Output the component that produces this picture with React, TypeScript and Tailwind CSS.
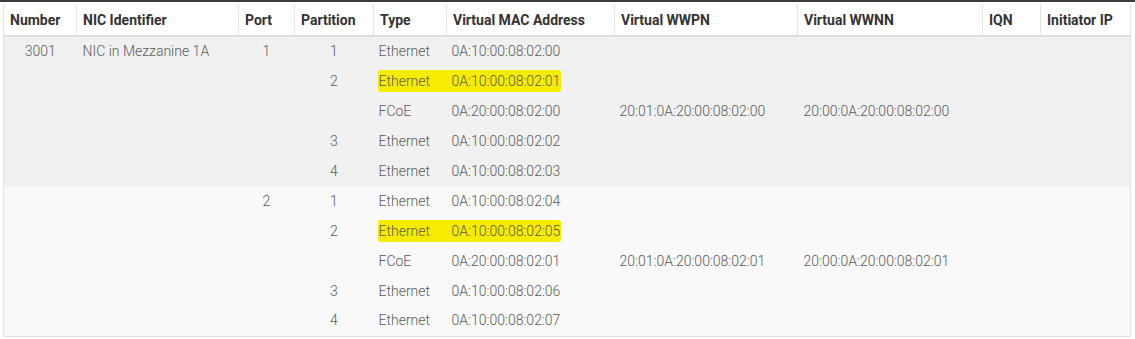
import React from "react";

type Row = {
  number?: string;
  nic?: string;
  port?: string;
  partition?: string;
  type: string;
  mac: string;
  wwpn?: string;
  wwnn?: string;
  hl?: boolean;
};

const group1: Row[] = [
  { number: "3001", nic: "NIC in Mezzanine 1A", port: "1", partition: "1", type: "Ethernet", mac: "0A:10:00:08:02:00" },
  { partition: "2", type: "Ethernet", mac: "0A:10:00:08:02:01", hl: true },
  { type: "FCoE", mac: "0A:20:00:08:02:00", wwpn: "20:01:0A:20:00:08:02:00", wwnn: "20:00:0A:20:00:08:02:00" },
  { partition: "3", type: "Ethernet", mac: "0A:10:00:08:02:02" },
  { partition: "4", type: "Ethernet", mac: "0A:10:00:08:02:03" },
];

const group2: Row[] = [
  { port: "2", partition: "1", type: "Ethernet", mac: "0A:10:00:08:02:04" },
  { partition: "2", type: "Ethernet", mac: "0A:10:00:08:02:05", hl: true },
  { type: "FCoE", mac: "0A:20:00:08:02:01", wwpn: "20:01:0A:20:00:08:02:01", wwnn: "20:00:0A:20:00:08:02:01" },
  { partition: "3", type: "Ethernet", mac: "0A:10:00:08:02:06" },
  { partition: "4", type: "Ethernet", mac: "0A:10:00:08:02:07" },
];

const headers = [
  "Number",
  "NIC Identifier",
  "Port",
  "Partition",
  "Type",
  "Virtual MAC Address",
  "Virtual WWPN",
  "Virtual WWNN",
  "IQN",
  "Initiator IP",
];

const widths = [73, 162, 56, 79, 73, 168, 183, 185, 58, 90];

function BodyRow({ r, bg }: { r: Row; bg: string }) {
  return (
    <tr className={`h-[30px] ${bg}`}>
      <td className="text-center p-0">{r.number ?? ""}</td>
      <td className="pl-[6px] p-0">{r.nic ?? ""}</td>
      <td className="text-center p-0">{r.port ?? ""}</td>
      <td className="text-center p-0">{r.partition ?? ""}</td>
      <td className="p-0">
        {r.hl ? (
          <div className="ml-[4px] h-[22px] flex items-center pl-[1px] bg-[#f6ec00] rounded-l-[2px]">{r.type}</div>
        ) : (
          <div className="pl-[5px]">{r.type}</div>
        )}
      </td>
      <td className="p-0">
        {r.hl ? (
          <div className="h-[22px] inline-flex items-center pl-[5px] pr-[1px] bg-[#f6ec00] rounded-r-[3px]">{r.mac}</div>
        ) : (
          <div className="pl-[5px]">{r.mac}</div>
        )}
      </td>
      <td className="pl-[5px] p-0">{r.wwpn ?? ""}</td>
      <td className="pl-[6px] p-0">{r.wwnn ?? ""}</td>
      <td className="p-0"></td>
      <td className="p-0"></td>
    </tr>
  );
}

export default function App() {
  return (
    <div className="w-[1135px] h-[339px] bg-white overflow-hidden" style={{ fontFamily: "Roboto, 'Liberation Sans', sans-serif" }}>
      <div className="h-[2px] bg-[#3c3c3c]" />
      <div className="pl-[3px] pt-[2px]">
        <table className="border-collapse table-fixed w-[1128px] border-x border-b border-[#e2e2e2] text-[14px]">
          <colgroup>
            {widths.map((w, i) => (
              <col key={i} style={{ width: w }} />
            ))}
          </colgroup>
          <thead>
            <tr className="h-[32px] bg-white">
              {headers.map((h, i) => (
                <th
                  key={h}
                  className={`text-left font-bold text-[#333] pl-[6px] pt-[1px] border-b-2 border-b-[#dedede] ${i < headers.length - 1 ? "border-r border-r-[#e4e4e4]" : ""}`}
                >
                  {h}
                </th>
              ))}
            </tr>
          </thead>
          <tbody className="font-light text-[#5a5a5a]">
            {group1.map((r, i) => (
              <BodyRow key={"a" + i} r={r} bg="bg-[#f1f1f1]" />
            ))}
            {group2.map((r, i) => (
              <BodyRow key={"b" + i} r={r} bg="bg-[#f9f9f9]" />
            ))}
          </tbody>
        </table>
      </div>
    </div>
  );
}
